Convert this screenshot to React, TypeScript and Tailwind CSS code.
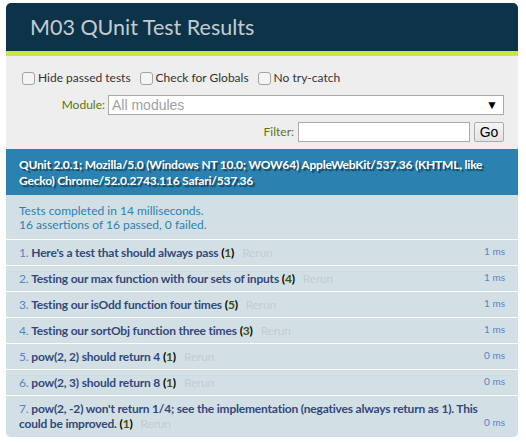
const tests = [
  { name: "Here's a test that should always pass", count: 1, time: "1 ms" },
  { name: "Testing our max function with four sets of inputs", count: 4, time: "1 ms" },
  { name: "Testing our isOdd function four times", count: 5, time: "1 ms" },
  { name: "Testing our sortObj function three times", count: 3, time: "1 ms" },
  { name: "pow(2, 2) should return 4", count: 1, time: "0 ms" },
  { name: "pow(2, 3) should return 8", count: 1, time: "0 ms" },
  {
    name: "pow(2, -2) won't return 1/4; see the implementation (negatives always return as 1). This could be improved.",
    count: 1,
    time: "0 ms",
  },
];

function Check({ label }: { label: string }) {
  return (
    <label className="flex items-center gap-[3px] text-[#333]">
      <span className="w-[13px] h-[13px] rounded-[3px] border border-[#a3a3a3] bg-[#f4f4f4]" />
      <span>{label}</span>
    </label>
  );
}

export default function App() {
  return (
    <div className="min-h-[443px] bg-white pt-[3px] pl-[6px] font-['Lato',sans-serif]">
      <div className="w-[512px]">
        {/* Header */}
        <h1 className="bg-[#0d3349] text-[#c2ccd1] text-[21.5px] leading-[24px] py-[12px] pl-[24px] rounded-t-[5px]">
          M03 QUnit Test Results
        </h1>
        <div className="h-[5px] bg-[#c6e746]" />

        {/* Toolbar */}
        <div className="bg-[#eeeeee] pl-[16px] pr-[14px] pt-[14px] pb-[7px] text-[12px] text-[#5e740b]">
          <div className="flex items-center gap-[9px] h-[16px]">
            <Check label="Hide passed tests" />
            <Check label="Check for Globals" />
            <Check label="No try-catch" />
          </div>
          <div className="flex items-center justify-end gap-[3px] mt-[9px]">
            <span>Module:</span>
            <div className="w-[396px] h-[20px] bg-white border border-[#a9a9a9] flex items-center justify-between pl-[3px] pr-[5px] font-['Liberation_Sans',sans-serif]">
              <span className="text-[14px] text-[#a0a0a0]">All modules</span>
              <span className="text-[12px] text-black">▼</span>
            </div>
          </div>
          <div className="flex items-center justify-end mt-[7px]">
            <span className="mr-[4px]">Filter:</span>
            <div className="w-[172px] h-[20px] bg-white border border-[#a9a9a9]" />
            <button className="ml-[4px] w-[30px] h-[20px] border border-[#acacac] rounded-[2px] bg-gradient-to-b from-[#f5f5f5] to-[#e3e3e3] text-black text-[14px] leading-[18px] font-['Liberation_Sans',sans-serif]">
              Go
            </button>
          </div>
        </div>

        {/* User agent */}
        <div className="bg-[#2b81af] text-white font-bold text-[12px] tracking-[-0.2px] leading-[16px] pl-[13px] pr-[6px] pt-[8px] pb-[6px] [text-shadow:rgba(0,0,0,0.5)_2px_2px_1px]">
          QUnit 2.0.1; Mozilla/5.0 (Windows NT 10.0; WOW64) AppleWebKit/537.36 (KHTML, like Gecko)
          Chrome/52.0.2743.116 Safari/537.36
        </div>

        {/* Result summary */}
        <div className="bg-[#d2e0e6] text-[#2b81af] text-[12px] leading-[14px] pl-[13px] pt-[9px] pb-[7px] border-b border-white">
          <div>Tests completed in 14 milliseconds.</div>
          <div>16 assertions of 16 passed, 0 failed.</div>
        </div>

        {/* Tests */}
        <ol>
          {tests.map((t, i) => (
            <li
              key={i}
              className={`bg-[#d2e0e6] text-[12px] tracking-[-0.2px] leading-[15px] pl-[13px] pr-[13px] pt-[5px] pb-[5px] border-b border-white ${
                i === tests.length - 1 ? "rounded-b-[5px] pb-[6px]" : ""
              }`}
            >
              <span className="text-[#5b82c6]">{i + 1}. </span>
              <strong className="text-[#32487a]">{t.name}</strong>{" "}
              <b className="text-black">
                (<span className="text-[#3c510c]">{t.count}</span>)
              </b>
              <span className="ml-[8px] text-[#c2ccd1]">Rerun</span>
              <span className="float-right text-[10px] tracking-normal text-[#5b82c6] mt-[-1px]">{t.time}</span>
            </li>
          ))}
        </ol>
      </div>
    </div>
  );
}
